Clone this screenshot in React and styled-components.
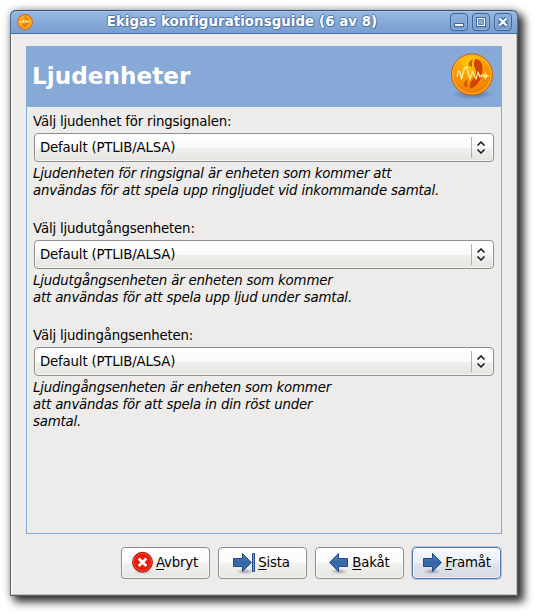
import React from "react";
import styled, { createGlobalStyle } from "styled-components";

const GlobalStyle = createGlobalStyle`
  * { box-sizing: border-box; }
  html, body { margin: 0; background: #fff; overflow: hidden; }
  body { font: 13.33px/17px "DejaVu Sans", sans-serif; letter-spacing: -0.18px; color: #000; }
`;

const Desktop = styled.div`
  width: 538px;
  height: 616px;
  padding: 10px;
`;

const Window = styled.main`
  width: 508px;
  height: 586px;
  display: flex;
  flex-direction: column;
  background: #edecea;
  border: 1px solid #5c5c5b;
  border-top: 0;
  border-radius: 6px 6px 0 0;
  box-shadow: inset 1px 0 #fff, inset -1px -1px #c3c1bd,
    5px 5px 8px 1px rgba(0, 0, 0, 0.78), 0 0 8px rgba(0, 0, 0, 0.28);
`;

const TitleBar = styled.header`
  height: 24px;
  margin: 0 -1px;
  flex: none;
  display: flex;
  align-items: center;
  padding: 0 5px 0 5px;
  border: 1px solid #486a96;
  border-top-color: #35527a;
  border-radius: 6px 6px 0 0;
  background: linear-gradient(#98b8e2, #86abd9 50%, #7a9fd0);
  box-shadow: inset 0 1px #a9c4e7;
`;

const WindowTitle = styled.h1`
  flex: 1;
  margin: 0;
  text-align: center;
  font-size: 13.33px;
  line-height: 20px;
  letter-spacing: 0.08px;
  color: #fff;
  text-shadow: 1px 0 #5079ae, -1px 0 #5079ae, 0 1px #5079ae, 0 -1px #5079ae,
    1px 1px #5079ae;
`;

const WindowControls = styled.div`
  display: flex;
  gap: 4px;
`;

const ControlButton = styled.button`
  width: 18px;
  height: 18px;
  padding: 0;
  border: 1px solid #3f6392;
  border-radius: 4px;
  background: linear-gradient(#8fb2df, #7399cc);
  box-shadow: inset 0 0 0 1px #92b3de;
  svg { display: block; }
`;

const Page = styled.section`
  width: 476px;
  height: 488px;
  margin: 12px 0 0 15px;
  border: 1px solid #86a9d7;
  border-top: 0;
`;

const Banner = styled.div`
  height: 61px;
  margin: 0 -1px;
  padding: 0 5px 2px 6px;
  display: flex;
  align-items: center;
  justify-content: space-between;
  background: #86a9d7;
`;

const PageTitle = styled.h2`
  margin: 0;
  color: #fff;
  font-size: 23.1px;
  line-height: 28px;
  letter-spacing: 0.05px;
`;

const Fields = styled.div`
  padding: 6px 6px 0;
`;

const Field = styled.div`
  height: 107px;
`;

const Label = styled.div`
  height: 17px;
`;

const Combo = styled.button`
  width: 460px;
  height: 29px;
  margin: 3px 0 3px 1px;
  padding: 0 6px 1px 5px;
  display: flex;
  align-items: center;
  font: inherit;
  letter-spacing: inherit;
  color: #000;
  border: 1px solid #8f8d89;
  border-radius: 4px;
  background: linear-gradient(#fff, #fafaf9 50%, #f0f0ee 51%, #e5e4e1);
  box-shadow: inset 0 0 0 1px rgba(255, 255, 255, 0.7);
  span { flex: 1; text-align: left; }
`;

const ComboDivider = styled.i`
  width: 1px;
  height: 21px;
  margin: 1px 3px 0 0;
  background: #b3b1ad;
`;

const Hint = styled.p`
  margin: 0;
  white-space: pre;
  font-style: italic;
`;

const Actions = styled.footer`
  display: flex;
  justify-content: flex-end;
  gap: 8px;
  padding: 13px 16px 0;
`;

const ActionButton = styled.button`
  width: 89px;
  height: 32px;
  padding: 0 2px 2px 0;
  display: flex;
  align-items: center;
  justify-content: center;
  gap: 1px;
  font: inherit;
  letter-spacing: inherit;
  color: #000;
  border: 1px solid ${(p) => (p.$primary ? "#5479a8" : "#8f8d89")};
  border-radius: 4px;
  background: ${(p) =>
    p.$primary
      ? "linear-gradient(#f6f9fd, #e9eef5 50%, #dfe4eb 51%, #d6dbe2)"
      : "linear-gradient(#fff, #fafaf9 50%, #f0f0ee 51%, #e7e6e3)"};
  box-shadow: ${(p) =>
    p.$primary
      ? "inset 0 0 0 1px #fff8, 0 0 0 1px #abc6e8"
      : "inset 0 0 0 1px #fffa"};
  svg { flex: none; margin-top: 2px; }
  u { text-decoration-thickness: 1px; text-underline-offset: 2px; text-decoration-skip-ink: none; }
`;

const EkigaLogo = ({ size }) => (
  <svg width={size} height={size} viewBox="0 0 48 48">
    <defs>
      <radialGradient id="coin" cx="45%" cy="20%" r="80%">
        <stop offset="0" stopColor="#ffd008" />
        <stop offset=".5" stopColor="#f99a06" />
        <stop offset="1" stopColor="#f07800" />
      </radialGradient>
      <radialGradient id="coinShade">
        <stop offset="0" stopColor="#314e75" stopOpacity=".6" />
        <stop offset="1" stopColor="#314e75" stopOpacity="0" />
      </radialGradient>
    </defs>
    <ellipse cx="23.5" cy="42" rx="21" ry="5.5" fill="url(#coinShade)" />
    <circle cx="23" cy="22.5" r="20.5" fill="url(#coin)" stroke="#cf5a00" strokeWidth="1" />
    <circle cx="23" cy="22.5" r="19.2" fill="none" stroke="#fdb92a" strokeWidth="1.1" />
    <path d="M24 7.5q-5 1-4.5 6l3.5 1.5q-.5-4 1-7.5z" fill="#dd5a04" />
    <path d="M26 7q7 0 7.5 9 0 10-4.5 15-4 5-8 5.5-1-5 2.5-9 4-5 3.5-9-3.5-6-1-11.5z" fill="#d14203" />
    <path d="M19 27q-4.5 2-4 6 .5 2.5 3.5 2.5-1-4.500.5-8.500z" fill="#dd5a04" />
    <path d="M8 25l1.5-6 1.5 1 1.5 7 3-11 2-1.5L21 27l2.5-7.5L27 27l2-7 2 5 2-2 3 1" fill="none" stroke="#ffeaa0" strokeWidth="1.3" strokeLinejoin="round" />
    <circle cx="36.5" cy="24" r="2" fill="#fff0a0" />
    <path d="M36.5 20.5v7M33 24h7.5" stroke="#ffe070" />
  </svg>
);

const SmallLogo = () => (
  <svg width="18" height="18" viewBox="0 0 18 18">
    <circle cx="9" cy="9" r="7.4" fill="#f6a00b" stroke="#d4641c" strokeWidth="1.1" />
    <circle cx="9" cy="9" r="6.2" fill="none" stroke="#fbc243" strokeWidth=".8" />
    <path d="M8 3l3 1 2 5-4 6-3-2 4-5z" fill="#ee7a05" />
    <path d="M4 8l1 2 2-3 1 3 2-3 1 3 1-2 2 1" fill="none" stroke="#fff0b0" />
  </svg>
);

const ControlGlyph = ({ kind }) => (
  <svg width="16" height="16" viewBox="0 0 16 16">
    {kind === "minimize" && (
      <path d="M3.5 9.5h9v3h-9z" fill="#fff" stroke="#416695" />
    )}
    {kind === "maximize" && (
      <>
        <path d="M3 3h10v10H3z" fill="#416695" />
        <path d="M4.5 4.5h7v7h-7z" fill="#8aaeda" stroke="#fff" />
        <path d="M5.5 5.5h5v5h-5z" fill="none" stroke="#5f87b9" />
      </>
    )}
    {kind === "close" && (
      <>
        <path d="M4.5 4.5l7 7m0-7l-7 7" fill="none" stroke="#416695" strokeWidth="4.6" />
        <path d="M4.5 4.5l7 7m0-7l-7 7" fill="none" stroke="#fff" strokeWidth="2.4" />
      </>
    )}
  </svg>
);

const ComboArrows = () => (
  <svg width="12" height="15" viewBox="0 0 12 15">
    <path d="M2.5 5.5L6 2l3.5 3.5M2.5 9.5L6 13l3.5-3.5" fill="none" stroke="#111" strokeWidth="1.5" />
  </svg>
);

const ButtonIcon = ({ kind }) => (
  <svg width="24" height="24" viewBox="0 0 24 24">
    <defs>
      <linearGradient id="arrowBlue" x2="0" y2="1">
        <stop stopColor="#5b86bd" />
        <stop offset=".5" stopColor="#3465a4" />
        <stop offset="1" stopColor="#4776b3" />
      </linearGradient>
      <radialGradient id="iconShade">
        <stop stopOpacity=".3" />
        <stop offset="1" stopOpacity="0" />
      </radialGradient>
    </defs>
    <ellipse cx="12" cy="20.5" rx="9" ry="3" fill="url(#iconShade)" />
    {kind === "cancel" ? (
      <>
        <circle cx="11.5" cy="11.2" r="9.9" fill="#e61a06" stroke="#b20d05" />
        <circle cx="11.5" cy="11.2" r="8.8" fill="none" stroke="#f3523c" />
        <path d="M7.7 7.4l7.6 7.6m0-7.6l-7.6 7.6" stroke="#fff" strokeWidth="2.8" />
      </>
    ) : (
      <>
        <path
          d={
            kind === "back"
              ? "M20.5 7.5h-9v-5L2.7 11.5l8.8 9v-5h9z"
              : kind === "last"
                ? "M.5 7.5h9v-5l8.8 9-8.8 9v-5h-9z"
                : "M3.5 7.5h9v-5l8.8 9-8.8 9v-5h-9z"
          }
          fill="url(#arrowBlue)"
          stroke="#204a87"
        />
        {kind === "last" && (
          <path d="M19.5 2.5h2v18h-2z" fill="#7ba0cf" stroke="#204a87" />
        )}
      </>
    )}
  </svg>
);

const fields = [
  {
    label: "Välj ljudenhet för ringsignalen:",
    hint: "Ljudenheten för ringsignal är enheten som kommer att\nanvändas för att spela upp ringljudet vid inkommande samtal.",
  },
  {
    label: "Välj ljudutgångsenheten:",
    hint: "Ljudutgångsenheten är enheten som kommer\natt användas för att spela upp ljud under samtal.",
  },
  {
    label: "Välj ljudingångsenheten:",
    hint: "Ljudingångsenheten är enheten som kommer\natt användas för att spela in din röst under\nsamtal.",
  },
];

const actions = [
  { icon: "cancel", key: "A", rest: "vbryt" },
  { icon: "last", key: "S", rest: "ista" },
  { icon: "back", key: "B", rest: "akåt" },
  { icon: "forward", key: "F", rest: "ramåt", primary: true },
];

export default function App() {
  return (
    <Desktop>
      <GlobalStyle />
      <Window>
        <TitleBar>
          <SmallLogo />
          <WindowTitle>Ekigas konfigurationsguide (6 av 8)</WindowTitle>
          <WindowControls>
            {["minimize", "maximize", "close"].map((kind) => (
              <ControlButton key={kind} aria-label={kind}>
                <ControlGlyph kind={kind} />
              </ControlButton>
            ))}
          </WindowControls>
        </TitleBar>
        <Page>
          <Banner>
            <PageTitle>Ljudenheter</PageTitle>
            <EkigaLogo size={48} />
          </Banner>
          <Fields>
            {fields.map((f) => (
              <Field key={f.label}>
                <Label>{f.label}</Label>
                <Combo>
                  <span>Default (PTLIB/ALSA)</span>
                  <ComboDivider />
                  <ComboArrows />
                </Combo>
                <Hint>{f.hint}</Hint>
              </Field>
            ))}
          </Fields>
        </Page>
        <Actions>
          {actions.map((a) => (
            <ActionButton key={a.icon} $primary={a.primary}>
              <ButtonIcon kind={a.icon} />
              <span>
                <u>{a.key}</u>
                {a.rest}
              </span>
            </ActionButton>
          ))}
        </Actions>
      </Window>
    </Desktop>
  );
}
